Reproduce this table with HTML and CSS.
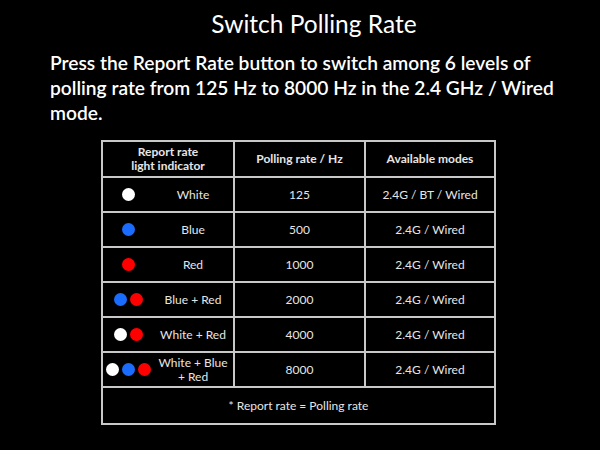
FILE: index.html
```html
<!DOCTYPE html>
<html>
<head>
<meta charset="utf-8">
<link rel="stylesheet" href="styles.css">
</head>
<body>
<div class="page">
  <h1 class="title">Switch Polling Rate</h1>
  <p class="intro">Press the Report Rate button to switch among 6 levels of polling rate from 125 Hz to 8000 Hz in the 2.4 GHz / Wired mode.</p>
  <table class="rates">
    <thead>
      <tr>
        <th class="c1">Report rate<br>light indicator</th>
        <th class="c2">Polling rate / Hz</th>
        <th class="c3">Available modes</th>
      </tr>
    </thead>
    <tbody>
      <tr>
        <td><div class="ind"><span class="dots"><i class="dot white"></i></span><span class="lbl">White</span></div></td>
        <td>125</td>
        <td>2.4G / BT / Wired</td>
      </tr>
      <tr>
        <td><div class="ind"><span class="dots"><i class="dot blue"></i></span><span class="lbl">Blue</span></div></td>
        <td>500</td>
        <td>2.4G / Wired</td>
      </tr>
      <tr>
        <td><div class="ind"><span class="dots"><i class="dot red"></i></span><span class="lbl">Red</span></div></td>
        <td>1000</td>
        <td>2.4G / Wired</td>
      </tr>
      <tr>
        <td><div class="ind"><span class="dots"><i class="dot blue"></i><i class="dot red"></i></span><span class="lbl">Blue + Red</span></div></td>
        <td>2000</td>
        <td>2.4G / Wired</td>
      </tr>
      <tr>
        <td><div class="ind"><span class="dots"><i class="dot white"></i><i class="dot red"></i></span><span class="lbl">White + Red</span></div></td>
        <td>4000</td>
        <td>2.4G / Wired</td>
      </tr>
      <tr>
        <td><div class="ind"><span class="dots"><i class="dot white"></i><i class="dot blue"></i><i class="dot red"></i></span><span class="lbl">White + Blue<br>+ Red</span></div></td>
        <td>8000</td>
        <td>2.4G / Wired</td>
      </tr>
      <tr>
        <td class="note" colspan="3">* Report rate = Polling rate</td>
      </tr>
    </tbody>
  </table>
</div>
</body>
</html>
```

FILE: styles.css
```css
html, body {
  margin: 0;
  padding: 0;
  background: #000;
}
.page {
  width: 600px;
  height: 450px;
  overflow: hidden;
  background: #000;
  color: #fff;
  font-family: Lato, "Open Sans", sans-serif;
}
.title {
  margin: 0;
  padding-top: 9px;
  padding-left: 28px;
  text-align: center;
  font-size: 24.5px;
  font-weight: 400;
  line-height: 30px;
}
.intro {
  margin: 11px 0 0 0;
  padding: 0 30px 0 50px;
  font-size: 19.2px;
  font-weight: 600;
  line-height: 25px;
}
.rates {
  margin: 15px 0 0 101px;
  border-collapse: collapse;
  border: 2px solid #c8c8c8;
  width: 393px;
  table-layout: fixed;
  color: #e6e6e6;
  font-size: 12px;
}
.rates th, .rates td {
  border: 2px solid #c8c8c8;
  text-align: center;
  vertical-align: middle;
  padding: 0;
  height: 33px;
}
.rates th {
  font-weight: 700;
  line-height: 14px;
  height: 34px;
}
.c1 { width: 130px; }
.c2 { width: 129px; }
.c3 { width: 128px; }
.ind {
  display: flex;
  align-items: center;
}
.dots {
  width: 50px;
  display: flex;
  justify-content: center;
  gap: 3px;
}
.dot {
  display: block;
  width: 13px;
  height: 13px;
  border-radius: 50%;
}
.white { background: #fff; }
.blue { background: #1a6cff; }
.red { background: #ff0000; }
.lbl {
  flex: 1;
  text-align: center;
  line-height: 14px;
}
.rates td.note {
  height: 35px;
  text-align: center;
}
```
